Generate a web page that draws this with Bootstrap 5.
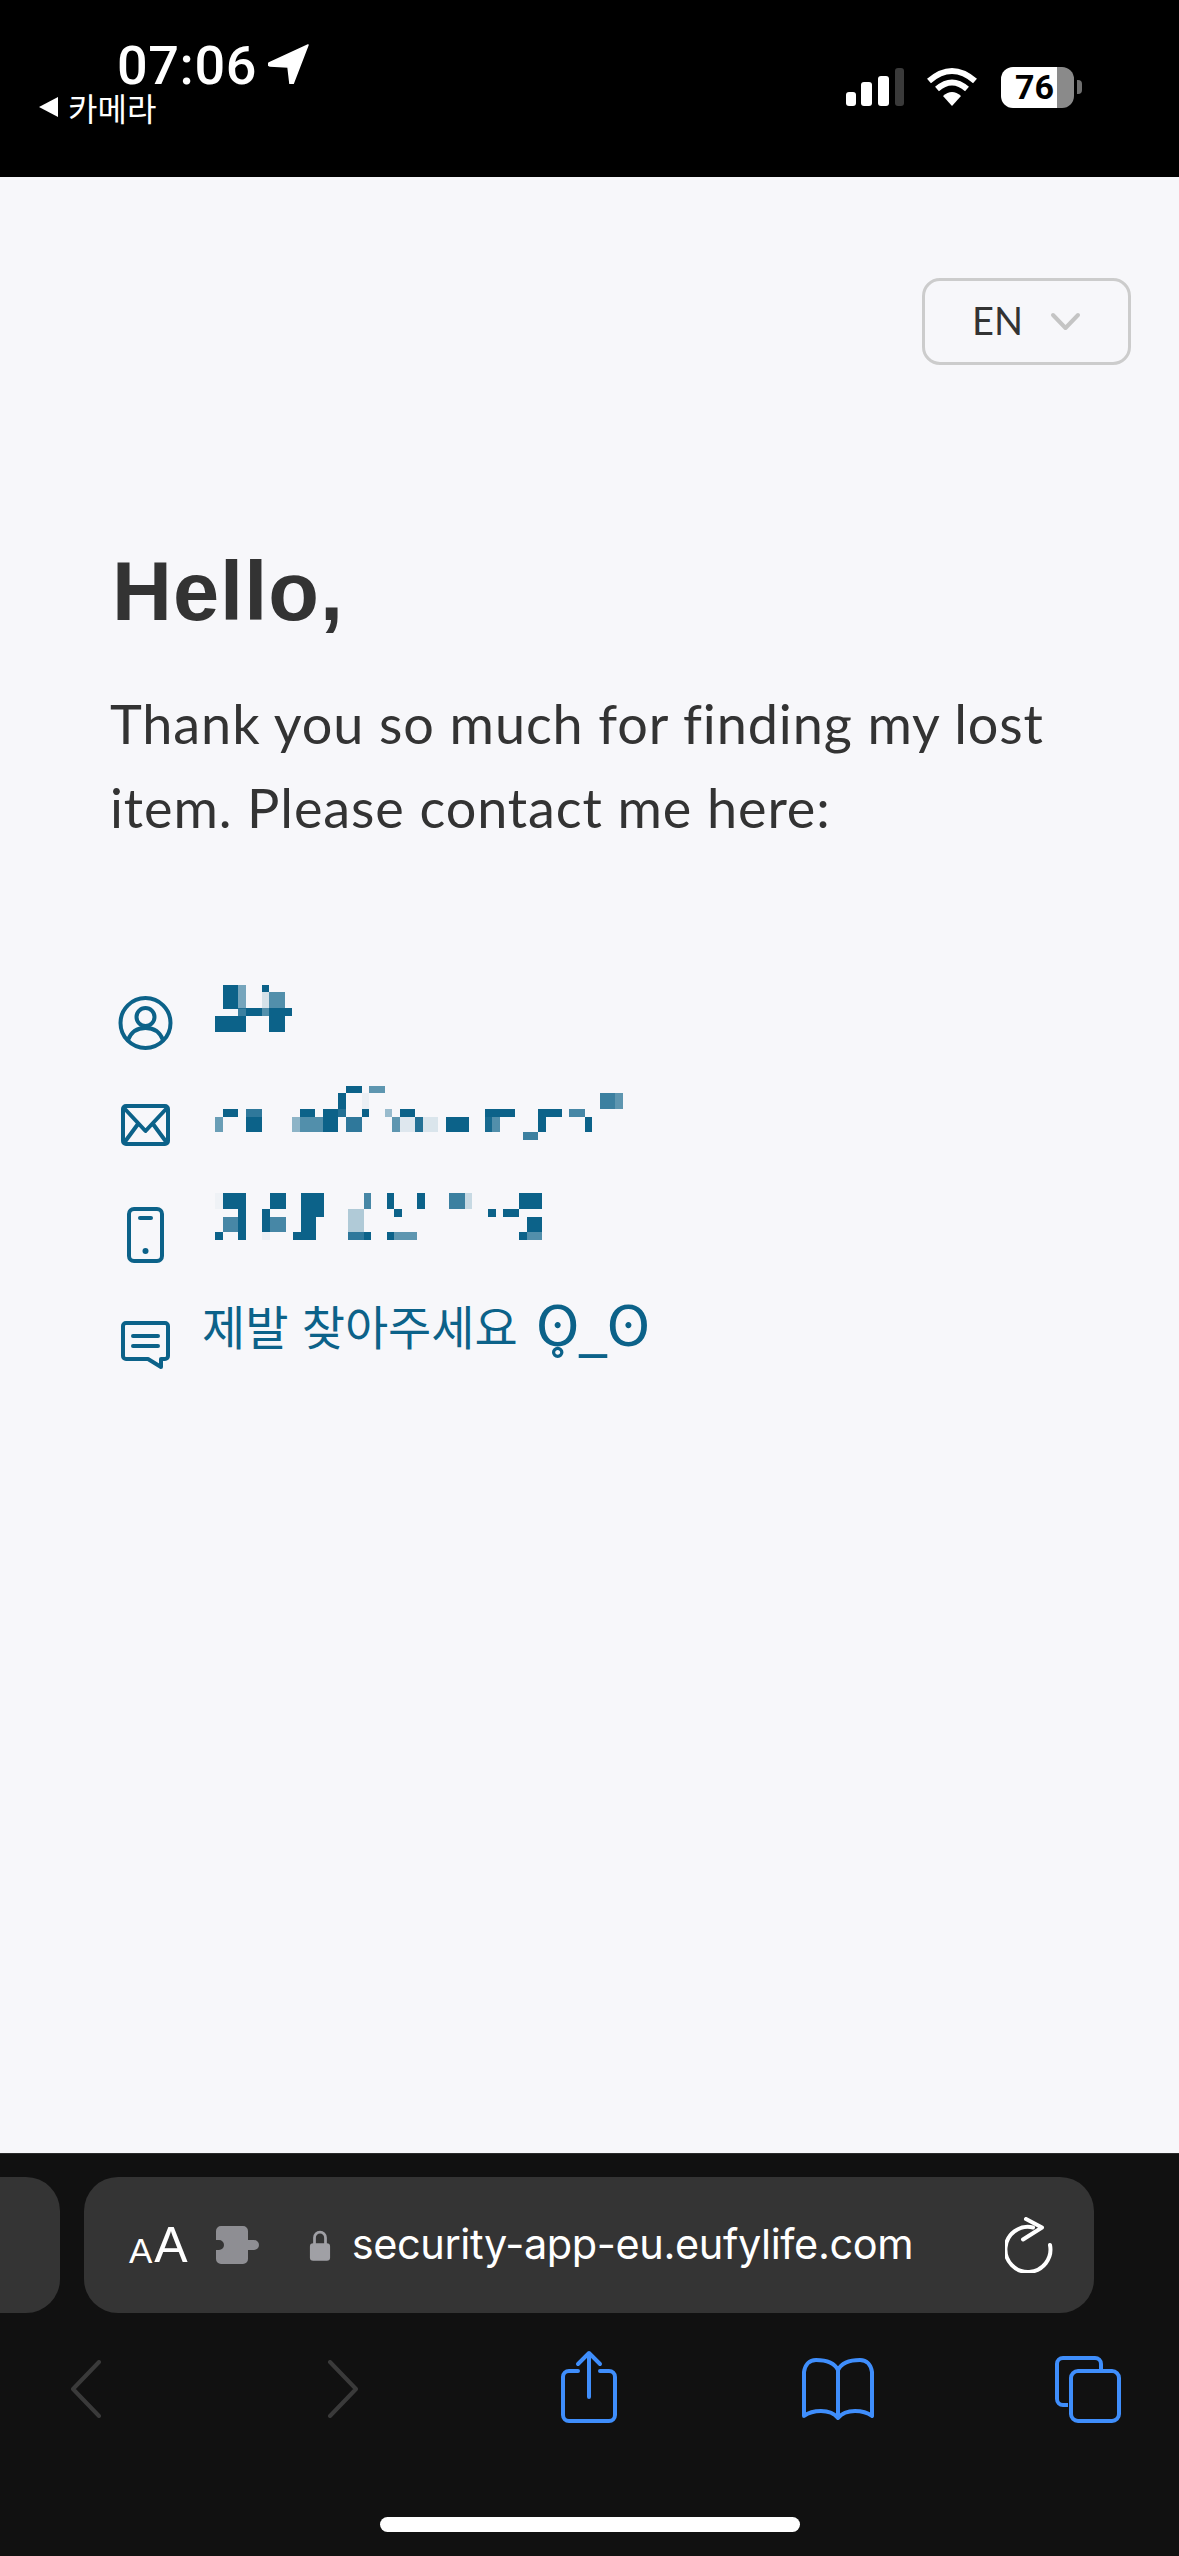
<!DOCTYPE html>
<html lang="ko">
<head>
  <meta charset="UTF-8" />
  <meta name="viewport" content="width=device-width, initial-scale=1.0" />
  <title>Found item</title>
  <link href="https://cdn.jsdelivr.net/npm/bootstrap@5.3.0/dist/css/bootstrap.min.css" rel="stylesheet">
  <style>
    html, body { margin: 0; background: #111; }
    .phone { width: 1179px; height: 2556px; overflow: hidden; font-family: "Liberation Sans", sans-serif; }

    .status-bar { height: 177px; background: #000; color: #fff; }
    .status-left { padding: 42px 0 0 38px; }
    .clock { margin-left: 79px; font: 500 54px/48px Roboto, "Liberation Sans", sans-serif; height: 48px; letter-spacing: .6px; }
    .clock-arrow { margin: 2px 0 0 11px; }
    .back-app { font: 400 32px/34px "Noto Sans CJK KR", sans-serif; margin-top: 0; }
    .status-right { padding: 67px 0 0 0; margin-right: 97px; }
    .wifi-ico { margin-left: 21px; }
    .batt { width: 73px; height: 41px; border-radius: 12px; background: linear-gradient(90deg, #fff 0 56px, #8a8a8a 56px); color: #000; font: 700 34px/41px Roboto, sans-serif; padding-left: 14px; margin-left: 23px; }
    .batt-nub { width: 5px; height: 14px; margin: 13px 0 0 3px; background: #6f6f6f; border-radius: 0 4px 4px 0; }

    .page { height: 1976px; background: #f7f7fa; padding: 101px 48px 0 112px; color: #333; }
    .lang-btn { width: 209px; height: 87px; border: 3px solid #ccc; border-radius: 18px; color: #333; font: 400 38px/1 Lato, "Liberation Sans", sans-serif; padding-left: 47px; gap: 27px; }
    .lang-name { margin-top: -4px; }
    .hello { font: 700 83px/100px "Liberation Sans", sans-serif; color: #333; margin: 177px 0 0 0; letter-spacing: 1px; }
    .intro { font: 400 54px/84px Lato, "Liberation Sans", sans-serif; color: #333; margin: 40px 0 0 -2px; width: 980px; letter-spacing: .9px; }

    .contact { margin: 143px 0 0 0; color: #0c6289; }
    .contact-row { margin-left: 3px; }
    .ico-cell { width: 61px; flex: none; }
    .row-name { height: 70px; }
    .row-mail { height: 92px; margin-top: 40px; }
    .row-tel { height: 78px; margin-top: 12px; }
    .row-note { margin-top: 36px; }
    .blur-name { margin: -10px 0 0 39px; }
    .blur-mail { margin: -19px 0 0 39px; }
    .blur-tel { margin: -15px 0 0 39px; }
    .note-text { margin: -27px 0 0 26px; font: 400 47px/62px "Noto Sans CJK KR", sans-serif; white-space: nowrap; }
    .note-face { font-family: "DejaVu Sans", sans-serif; font-size: 55px; margin-left: 5px; }

    .safari { height: 403px; background: #111; border-top: 1px solid #2a2a2a; padding-top: 23px; color: #fff; }
    .tab-prev { width: 60px; height: 136px; background: #343434; border-radius: 0 34px 34px 0; }
    .url-bar { width: 1010px; height: 136px; margin-left: 24px; background: #343434; border-radius: 34px; padding-left: 45px; }
    .aa-small { font-size: 35px; line-height: 1; margin-top: 10px; }
    .aa-big { font-size: 50px; line-height: 1; margin-left: 2px; }
    .ico-puzzle { margin-left: 28px; }
    .ico-lock { margin-left: 47px; }
    .url-text { font: 400 41.500px/1 Inter, "Liberation Sans", sans-serif; width: 560px; margin-left: 21px; white-space: nowrap; letter-spacing: -.4px; }
    .ico-reload { margin-left: 93px; }
    .toolbar { height: 72px; margin-top: 37px; }
    .bar-ico { flex: none; }
    .home-bar { width: 420px; height: 15px; background: #fff; border-radius: 8px; margin: 95px 0 0 380px; }
  </style>
</head>
<body>
<div class="phone d-flex flex-column">

  <div class="status-bar d-flex justify-content-between">
    <div class="status-left">
      <div class="clock d-flex">07:06
        <svg class="clock-arrow" width="42" height="40" viewBox="0 0 42 40"><path d="M40 1 1 19q-2 2 1 3l18 1 2 17q2 2 3 0z" fill="#fff" stroke="#fff" stroke-width="1.5" stroke-linejoin="round"/></svg>
      </div>
      <div class="back-app d-flex align-items-center">
        <svg width="22" height="24" viewBox="0 0 22 22"><path d="M20 1v20L1 11z" fill="#fff"/></svg>
        <span class="ms-2">카메라</span>
      </div>
    </div>
    <div class="status-right d-flex align-items-start">
      <svg width="60" height="40" viewBox="0 0 60 40">
        <rect x="1" y="25" width="10" height="14" rx="3" fill="#fff"/>
        <rect x="16" y="15" width="11" height="24" rx="3" fill="#fff"/>
        <rect x="33" y="9" width="11" height="30" rx="3" fill="#fff"/>
        <rect x="50" y="1" width="9" height="38" rx="3" fill="#3a3a3a"/>
      </svg>
      <svg class="wifi-ico" width="52" height="40" viewBox="0 0 52 40" fill="none" stroke="#fff" stroke-width="6">
        <path d="M3 14Q26-6 49 14"/>
        <path d="M11 22Q26 9 41 22"/>
        <path d="M26 39 17 29Q26 21 35 29z" fill="#fff" stroke="none"/>
      </svg>
      <div class="batt">76</div>
      <div class="batt-nub"></div>
    </div>
  </div>

  <div class="page">
    <div class="d-flex justify-content-end">
      <div class="lang-btn d-flex align-items-center">
        <span class="lang-name">EN</span>
        <svg width="31" height="19" viewBox="0 0 31 19" fill="none" stroke="#c4c4c4" stroke-width="4" stroke-linecap="round" stroke-linejoin="round"><path d="M3 3l12.500 13L28 3"/></svg>
      </div>
    </div>

    <h1 class="hello">Hello,</h1>
    <p class="intro">Thank you so much for finding my lost item. Please contact me here:</p>

    <div class="contact">
      <div class="contact-row row-name d-flex">
        <div class="ico-cell">
          <svg width="61" height="60" viewBox="0 0 61 60" fill="none" stroke="#0c6289" stroke-width="4">
            <circle cx="30.500" cy="30" r="25"/>
            <circle cx="30.500" cy="24" r="9"/>
            <path d="M13 47c3-8 9-12 17.500-12S45 39 48 47"/>
          </svg>
        </div>
        <svg class="blur-name" width="77" height="49" viewBox="327 105 201 145" preserveAspectRatio="none" fill="#0c6289" shape-rendering="crispEdges">
          <rect x="348" y="111" width="40" height="70"/><rect x="387" y="111" width="21" height="70" opacity=".55"/><rect x="449" y="111" width="20" height="21"/><rect x="449" y="132" width="20" height="48" opacity=".15"/><rect x="469" y="132" width="41" height="48" opacity=".7"/><rect x="387" y="180" width="21" height="24" opacity=".8"/><rect x="408" y="180" width="41" height="24"/><rect x="449" y="180" width="20" height="24" opacity=".7"/><rect x="469" y="180" width="59" height="24"/><rect x="327" y="204" width="81" height="45"/><rect x="469" y="204" width="41" height="45"/>
        </svg>
      </div>

      <div class="contact-row row-mail d-flex">
        <div class="ico-cell">
          <svg width="61" height="44" viewBox="0 0 61 44" fill="none" stroke="#0c6289" stroke-width="4" stroke-linejoin="round">
            <rect x="8" y="3" width="45" height="38" rx="3"/>
            <path d="M9 5l21.500 23L52 5M9 40l14-19M52 40L38 21"/>
          </svg>
        </div>
        <svg class="blur-mail" width="408" height="57" viewBox="327 405 1066 170" preserveAspectRatio="none" fill="#0c6289" shape-rendering="crispEdges">
          <rect x="669" y="411" width="42" height="21"/><rect x="729" y="411" width="42" height="21" opacity=".65"/><rect x="648" y="432" width="21" height="48"/><rect x="1333" y="432" width="40" height="48" opacity=".8"/><rect x="1373" y="432" width="20" height="48" opacity=".65"/><rect x="711" y="432" width="18" height="48" opacity=".05"/>
          <rect x="348" y="480" width="39" height="24"/><rect x="408" y="480" width="41" height="24" opacity=".85"/><rect x="549" y="480" width="40" height="24"/><rect x="609" y="480" width="39" height="24"/><rect x="648" y="480" width="21" height="24" opacity=".9"/><rect x="711" y="480" width="18" height="24"/><rect x="771" y="480" width="18" height="24" opacity=".4"/><rect x="810" y="480" width="39" height="24"/><rect x="1032" y="480" width="79" height="24"/><rect x="1171" y="480" width="62" height="24"/><rect x="1252" y="480" width="42" height="24" opacity=".75"/>
          <rect x="327" y="504" width="21" height="45" opacity=".6"/><rect x="408" y="504" width="41" height="45"/><rect x="528" y="504" width="21" height="45" opacity=".45"/><rect x="549" y="504" width="60" height="45" opacity=".7"/><rect x="609" y="504" width="39" height="45"/><rect x="669" y="504" width="42" height="45" opacity=".85"/><rect x="789" y="504" width="21" height="45" opacity=".65"/><rect x="810" y="504" width="39" height="45" opacity=".1"/><rect x="849" y="504" width="21" height="45" opacity=".9"/><rect x="870" y="504" width="39" height="45" opacity=".12"/><rect x="930" y="504" width="60" height="45"/><rect x="1032" y="504" width="19" height="45" opacity=".95"/><rect x="1051" y="504" width="20" height="45" opacity=".7"/><rect x="1171" y="504" width="21" height="45"/><rect x="1294" y="504" width="18" height="45"/>
          <rect x="1132" y="549" width="39" height="24" opacity=".8"/>
        </svg>
      </div>

      <div class="contact-row row-tel d-flex">
        <div class="ico-cell">
          <svg width="61" height="56" viewBox="0 0 61 56" fill="none" stroke="#0c6289" stroke-width="4">
            <rect x="14" y="2" width="33" height="52" rx="5"/>
            <path d="M25 11h11" stroke-linecap="round" stroke-width="4"/>
            <circle cx="30.500" cy="44" r="3" fill="#0c6289" stroke="none"/>
          </svg>
        </div>
        <svg class="blur-tel" width="327" height="49" viewBox="327 730 844 145" preserveAspectRatio="none" fill="#0c6289" shape-rendering="crispEdges">
          <rect x="327" y="732" width="21" height="48" opacity=".03"/><rect x="348" y="732" width="60" height="48"/><rect x="469" y="732" width="41" height="48"/><rect x="549" y="732" width="60" height="48"/><rect x="711" y="732" width="18" height="48" opacity=".75"/><rect x="771" y="732" width="18" height="48"/><rect x="849" y="732" width="21" height="48"/><rect x="930" y="732" width="42" height="48" opacity=".8"/><rect x="972" y="732" width="18" height="48" opacity=".2"/><rect x="1111" y="732" width="60" height="48"/>
          <rect x="387" y="780" width="21" height="24"/><rect x="449" y="780" width="20" height="24"/><rect x="549" y="780" width="60" height="24"/><rect x="669" y="780" width="42" height="24" opacity=".3"/><rect x="789" y="780" width="21" height="24"/><rect x="1032" y="780" width="19" height="24"/><rect x="1071" y="780" width="40" height="24"/>
          <rect x="348" y="804" width="39" height="45" opacity=".75"/><rect x="387" y="804" width="21" height="45"/><rect x="449" y="804" width="20" height="45"/><rect x="469" y="804" width="41" height="45" opacity=".75"/><rect x="549" y="804" width="39" height="45"/><rect x="669" y="804" width="42" height="45" opacity=".3"/><rect x="1132" y="804" width="39" height="45"/>
          <rect x="327" y="849" width="21" height="24"/><rect x="387" y="849" width="21" height="24"/><rect x="449" y="849" width="20" height="24" opacity=".05"/><rect x="528" y="849" width="60" height="24"/><rect x="669" y="849" width="42" height="24" opacity=".85"/><rect x="711" y="849" width="18" height="24"/><rect x="771" y="849" width="18" height="24"/><rect x="789" y="849" width="60" height="24" opacity=".65"/><rect x="1111" y="849" width="21" height="24"/><rect x="1132" y="849" width="39" height="24" opacity=".7"/>
        </svg>
      </div>

      <div class="contact-row row-note d-flex">
        <div class="ico-cell">
          <svg width="61" height="48" viewBox="0 0 61 48" fill="none" stroke="#0c6289" stroke-width="4" stroke-linejoin="round">
            <path d="M11 2h39a3 3 0 0 1 3 3v30a3 3 0 0 1-3 3H46v8L33 38H11a3 3 0 0 1-3-3V5a3 3 0 0 1 3-3z"/>
            <path d="M18 15h25M18 25h25" stroke-linecap="round"/>
          </svg>
        </div>
        <div class="note-text">제발 찾아주세요 <span class="note-face">ʘ̥_ʘ</span></div>
      </div>
    </div>
  </div>

  <div class="safari">
    <div class="d-flex">
      <div class="tab-prev"></div>
      <div class="url-bar d-flex align-items-center">
        <span class="aa-small">A</span><span class="aa-big">A</span>
        <svg class="ico-puzzle" width="46" height="38" viewBox="0 0 46 38">
          <path d="M5 0h22a5 5 0 0 1 5 5v9h6a5 5 0 0 1 0 10h-6v9a5 5 0 0 1-5 5H5a5 5 0 0 1-5-5V24h3a5 5 0 0 0 0-10H0V5a5 5 0 0 1 5-5z" fill="#8e8e93"/>
        </svg>
        <svg class="ico-lock" width="22" height="33" viewBox="1 0 24 33" fill="none">
          <path d="M7 15V8a6 6 0 0 1 12 0v7" stroke="#a0a0a5" stroke-width="3"/>
          <rect x="2" y="14" width="22" height="19" rx="3.500" fill="#a0a0a5"/>
        </svg>
        <span class="url-text">security-app-eu.eufylife.com</span>
        <svg class="ico-reload" width="48" height="56" viewBox="0 0 48 56" fill="none" stroke="#fff" stroke-width="4" stroke-linecap="round" stroke-linejoin="round">
          <path d="M28 10.500A22.500 22.500 0 1 0 45 28"/>
          <path d="M21 2l16 8.500-19 12"/>
        </svg>
      </div>
    </div>

    <div class="toolbar d-flex">
      <svg class="bar-ico" width="32" height="58" viewBox="0 0 32 58" fill="none" stroke="#3a3a3a" stroke-width="4" stroke-linecap="round" stroke-linejoin="round" style="margin:10px 0 0 70px"><path d="M29 2 3 29l26 27"/></svg>
      <svg class="bar-ico" width="32" height="58" viewBox="0 0 32 58" fill="none" stroke="#3a3a3a" stroke-width="4" stroke-linecap="round" stroke-linejoin="round" style="margin:10px 0 0 225px"><path d="M3 2l26 27L3 56"/></svg>
      <svg class="bar-ico" width="58" height="74" viewBox="0 0 58 74" fill="none" stroke="#3f8efc" stroke-width="4" stroke-linecap="round" stroke-linejoin="round" style="margin:0 0 0 201px"><path d="M18 21H9a6 6 0 0 0-6 6v38a6 6 0 0 0 6 6h40a6 6 0 0 0 6-6V27a6 6 0 0 0-6-6h-9"/><path d="M29 47V3M18 14 29 3l11 11"/></svg>
      <svg class="bar-ico" width="72" height="62" viewBox="0 0 72 62" fill="none" stroke="#3f8efc" stroke-width="4" stroke-linecap="round" stroke-linejoin="round" style="margin:8px 0 0 184px"><path d="M36 12C32 4 24 2 14 2 7 2 3 7 2 14v44c8-6 26-8 34 2 8-10 26-8 34-2V14c-1-7-5-12-12-12-10 0-18 2-22 10zM36 12v46"/></svg>
      <svg class="bar-ico" width="68" height="68" viewBox="0 0 68 68" fill="none" stroke="#3f8efc" stroke-width="4" stroke-linejoin="round" style="margin:5px 0 0 180px"><path d="M14 50H9a6 6 0 0 1-6-6V9a6 6 0 0 1 6-6h32a6 6 0 0 1 6 6v6"/><rect x="17" y="16" width="48" height="50" rx="7"/></svg>
    </div>

    <div class="home-bar"></div>
  </div>
</div>

<script src="https://cdn.jsdelivr.net/npm/bootstrap@5.3.0/dist/js/bootstrap.bundle.min.js"></script>
</body>
</html>
